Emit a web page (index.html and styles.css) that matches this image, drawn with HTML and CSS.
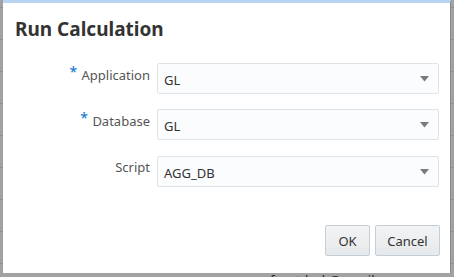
FILE: index.html
```html
<!DOCTYPE html>
<html>
<head>
<meta charset="utf-8">
<link rel="stylesheet" href="styles.css">
</head>
<body>
<div class="dialog">
  <h1 class="title">Run Calculation</h1>
  <div class="form">
    <label class="label"><span class="req">*</span> Application</label>
    <div class="select"><span>GL</span><svg class="caret" width="9" height="6" viewBox="0 0 9 6"><path d="M0 0H9L4.5 5.5Z" fill="#7b7b7b"/></svg></div>
    <label class="label"><span class="req">*</span> Database</label>
    <div class="select"><span>GL</span><svg class="caret" width="9" height="6" viewBox="0 0 9 6"><path d="M0 0H9L4.5 5.5Z" fill="#7b7b7b"/></svg></div>
    <label class="label">Script</label>
    <div class="select third"><span>AGG_DB</span><svg class="caret" width="9" height="6" viewBox="0 0 9 6"><path d="M0 0H9L4.5 5.5Z" fill="#7b7b7b"/></svg></div>
  </div>
  <div class="buttons">
    <button class="btn ok">OK</button>
    <button class="btn cancel">Cancel</button>
  </div>
</div>
<div class="footer">frontdesk@gmail.com</div>
</body>
</html>
```

FILE: styles.css
```css
html, body {
  margin: 0;
  padding: 0;
  width: 454px;
  height: 277px;
  overflow: hidden;
}
body {
  background-color: #a2a2a2;
  background-image: repeating-linear-gradient(to bottom, transparent 0, transparent 7px, #8f8f8f 7px, #8f8f8f 8px, transparent 8px, transparent 32px);
  padding-left: 3px;
  box-sizing: border-box;
  font-family: "Noto Sans", "Open Sans", sans-serif;
}
.dialog {
  width: 448px;
  height: 273px;
  box-sizing: border-box;
  background: #fff;
  border-top: 3px solid #b5d5f0;
  border-right: 1px solid #8a8a8a;
  display: flex;
  flex-direction: column;
}
.title {
  margin: 0;
  padding: 14px 0 0 12px;
  font-size: 19px;
  font-weight: 700;
  line-height: 24px;
  color: #333;
  height: 24px;
}
.form {
  margin-top: 22px;
  display: grid;
  grid-template-columns: 147px 282px;
  column-gap: 7px;
  row-gap: 15px;
}
.label {
  text-align: right;
  font-size: 13px;
  line-height: 18px;
  padding-top: 3px;
  color: #555;
}
.req {
  color: #0572ce;
  font-size: 14px;
  position: relative;
  top: -3px;
  margin-right: 1px;
}
.select {
  height: 31px;
  box-sizing: border-box;
  background: #fbfcfd;
  border: 1px solid #dfe4e8;
  border-radius: 2px;
  display: flex;
  align-items: center;
  justify-content: space-between;
  padding: 3px 9px 0 6px;
  font-size: 13px;
  color: #333;
}
.third {
  margin-top: 1px;
}
.caret {
  display: block;
  margin-top: -2px;
}
.buttons {
  margin-top: 38px;
  display: flex;
  justify-content: flex-end;
  gap: 5px;
  padding-right: 10px;
}
.btn {
  height: 31px;
  box-sizing: border-box;
  border: 1px solid #c4ced6;
  border-radius: 2px;
  background: linear-gradient(#f2f3f4, #e6e9eb);
  font-family: "Noto Sans", "Open Sans", sans-serif;
  font-size: 13px;
  color: #333;
  padding: 0;
}
.ok { width: 45px; }
.cancel { width: 65px; }
.footer {
  padding-left: 267px;
  font-size: 13px;
  line-height: 14px;
  color: #222;
}
```
